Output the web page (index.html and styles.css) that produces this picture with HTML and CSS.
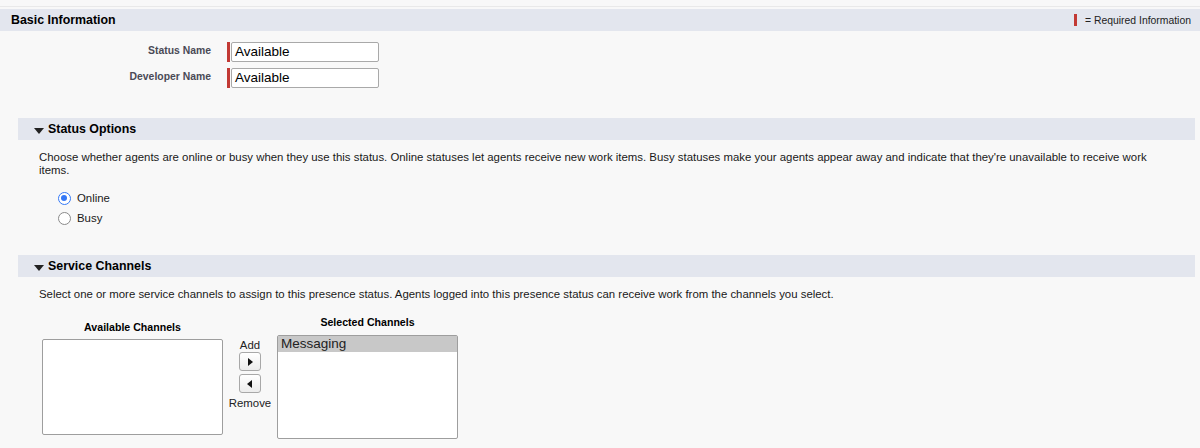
FILE: index.html
```html
<!DOCTYPE html>
<html>
<head>
<meta charset="utf-8">
<link rel="stylesheet" href="styles.css">
</head>
<body>
<div class="page">
  <div class="topline"></div>
  <div class="band band-main">
    <h2 class="band-title">Basic Information</h2>
    <div class="req-legend"><span class="req-bar"></span>= Required Information</div>
  </div>
  <div class="fields">
    <div class="field-row">
      <label class="field-label">Status Name</label>
      <div class="req-input"><span class="req-bar tall"></span><div class="text-input">Available</div></div>
    </div>
    <div class="field-row">
      <label class="field-label">Developer Name</label>
      <div class="req-input"><span class="req-bar tall"></span><div class="text-input">Available</div></div>
    </div>
  </div>

  <div class="band band-sub">
    <span class="caret"></span><h3 class="band-title">Status Options</h3>
  </div>
  <div class="section-body">
    <p class="desc">Choose whether agents are online or busy when they use this status. Online statuses let agents receive new work items. Busy statuses make your agents appear away and indicate that they're unavailable to receive work items.</p>
    <div class="radios">
      <div class="radio-row"><span class="radio checked"></span><span>Online</span></div>
      <div class="radio-row"><span class="radio"></span><span>Busy</span></div>
    </div>
  </div>

  <div class="band band-sub band-service">
    <span class="caret"></span><h3 class="band-title">Service Channels</h3>
  </div>
  <div class="section-body">
    <p class="desc single">Select one or more service channels to assign to this presence status. Agents logged into this presence status can receive work from the channels you select.</p>
  </div>
  <div class="dual-list">
    <div class="list-col col-available">
      <div class="list-label">Available Channels</div>
      <div class="listbox small"></div>
    </div>
    <div class="mover">
      <div class="mover-label">Add</div>
      <div class="mover-btn first"><span class="tri-right"></span></div>
      <div class="mover-btn"><span class="tri-left"></span></div>
      <div class="mover-label">Remove</div>
    </div>
    <div class="list-col col-selected">
      <div class="list-label">Selected Channels</div>
      <div class="listbox big"><div class="option selected">Messaging</div></div>
    </div>
  </div>
</div>
</body>
</html>
```

FILE: styles.css
```css
html, body {
  margin: 0;
  padding: 0;
  background: #f8f8f8;
}
body {
  font-family: "Liberation Sans", Arial, sans-serif;
  color: #181818;
  font-size: 12px;
  width: 1200px;
  height: 448px;
  overflow: hidden;
}
.page {
  padding-top: 6px;
}
.topline {
  height: 1px;
  background: #e9e9e9;
  margin-bottom: 2px;
}
.band {
  display: flex;
  align-items: center;
  background: #e3e6ee;
  height: 22px;
}
.band-main {
  padding: 0 9px 0 11px;
  justify-content: space-between;
}
.band-title {
  margin: 0;
  font-size: 12.4px;
  font-weight: bold;
  color: #000;
}
.req-legend {
  display: flex;
  align-items: center;
  font-size: 10.4px;
  color: #222;
}
.req-legend .req-bar {
  width: 3px;
  height: 12px;
  background: #c23934;
  margin-right: 8px;
}
.fields {
  padding-top: 11px;
  display: flex;
  flex-direction: column;
  gap: 6px;
}
.field-row {
  display: flex;
  align-items: center;
  height: 20px;
}
.field-label {
  width: 211px;
  text-align: right;
  font-size: 10.4px;
  font-weight: bold;
  color: #4a4a56;
  margin-right: 16px;
  position: relative;
  top: -2px;
}
.req-input {
  display: flex;
  height: 20px;
}
.req-bar.tall {
  width: 3px;
  background: #c23934;
  height: 20px;
  margin-right: 1px;
}
.text-input {
  width: 143px;
  height: 18px;
  border: 1px solid #a9a9a9;
  border-radius: 2px;
  background: #fff;
  font-size: 13.5px;
  line-height: 18px;
  padding-left: 3px;
  color: #000;
}
.band-sub {
  margin: 30px 5px 0 18px;
  padding-left: 16px;
}
.band-service {
  margin-top: 31px;
}
.caret {
  width: 0;
  height: 0;
  border-left: 5px solid transparent;
  border-right: 5px solid transparent;
  border-top: 6px solid #222;
  margin-right: 4px;
  position: relative;
  top: 2px;
}
.section-body {
  padding-left: 39px;
  padding-right: 20px;
}
.desc {
  margin: 11px 0 0 0;
  font-size: 11.4px;
  line-height: 13px;
  color: #181818;
}
.desc.single {
  margin-top: 11px;
}
.radios {
  margin-top: 14px;
  padding-left: 19px;
  display: flex;
  flex-direction: column;
  gap: 7px;
}
.radio-row {
  display: flex;
  align-items: center;
  height: 13px;
  font-size: 11.4px;
}
.radio {
  box-sizing: border-box;
  width: 13px;
  height: 13px;
  border-radius: 50%;
  border: 1px solid #8a8a8a;
  background: #fff;
  margin-right: 6px;
  position: relative;
  top: 1px;
}
.radio.checked {
  border: 1.5px solid #3478f6;
}
.radio.checked::after {
  content: "";
  position: absolute;
  left: 2px;
  top: 2px;
  width: 6px;
  height: 6px;
  border-radius: 50%;
  background: #3478f6;
}
.dual-list {
  display: flex;
  padding-left: 42px;
  margin-top: 15px;
}
.list-col {
  display: flex;
  flex-direction: column;
  align-items: center;
}
.list-label {
  font-size: 10.6px;
  font-weight: bold;
  color: #000;
}
.col-available {
  padding-top: 5px;
}
.col-available .list-label {
  margin-bottom: 6px;
}
.col-selected .list-label {
  margin-bottom: 7px;
}
.listbox {
  box-sizing: border-box;
  width: 181px;
  background: #fff;
  border: 1px solid #9e9e9e;
  border-radius: 2px;
}
.listbox.small {
  height: 96px;
}
.listbox.big {
  height: 104px;
}
.option {
  font-size: 13.5px;
  line-height: 16px;
  padding-left: 3px;
  color: #222;
}
.option.selected {
  background: #c8c8c8;
}
.mover {
  width: 54px;
  display: flex;
  flex-direction: column;
  align-items: center;
  padding-top: 22px;
}
.mover-label {
  font-size: 11.4px;
  line-height: 14px;
  color: #222;
}
.mover-btn {
  box-sizing: border-box;
  width: 22px;
  height: 19px;
  border: 1px solid #a8a8a8;
  border-radius: 3px;
  background: linear-gradient(#ffffff, #ececec);
  display: flex;
  align-items: center;
  justify-content: center;
  margin-top: 3px;
}
.mover-btn.first {
  margin-top: 0;
}
.mover-btn + .mover-label {
  margin-top: 3px;
}
.tri-right {
  width: 0;
  height: 0;
  border-top: 4px solid transparent;
  border-bottom: 4px solid transparent;
  border-left: 5px solid #111;
  margin-left: 1px;
}
.tri-left {
  width: 0;
  height: 0;
  border-top: 4px solid transparent;
  border-bottom: 4px solid transparent;
  border-right: 5px solid #111;
  margin-right: 1px;
}
```
